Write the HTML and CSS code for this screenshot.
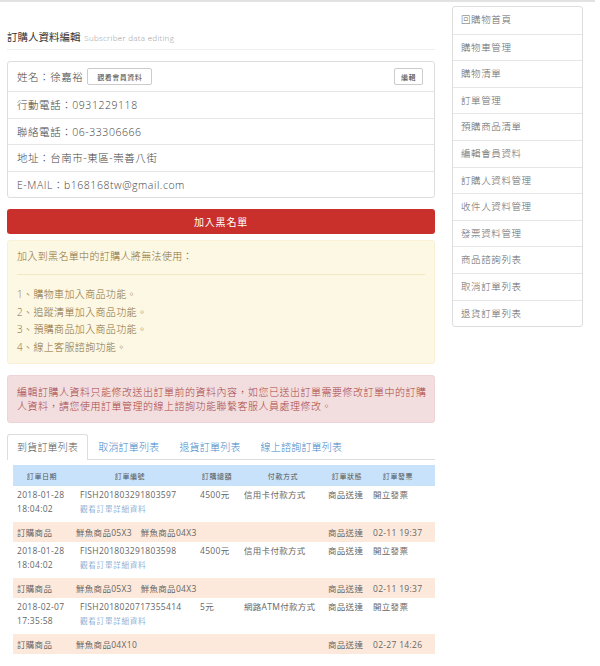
FILE: index.html
```html
<html><head>
<meta charset="utf-8">
<meta name="viewport" content="width=device-width, initial-scale=1">
<title>訂購人資料編輯</title>
<link rel="stylesheet" href="styles.css">
</head>
<body>
  <div class="topbar"></div>

  <div class="page">
    <main class="content">
      <div class="page-header">
        <h1>訂購人資料編輯 <small>Subscriber data editing</small></h1>
      </div>

      <ul class="info-list">
        <li class="info-name">
          <span>姓名：徐嘉裕</span>
          <button class="btn-sm">觀看會員資料</button>
          <button class="btn-sm btn-edit">編輯</button>
        </li>
        <li>行動電話：0931229118</li>
        <li>聯絡電話：06-33306666</li>
        <li>地址：台南市-東區-崇善八街</li>
        <li>E-MAIL：b168168tw@gmail.com</li>
      </ul>

      <button class="btn-danger">加入黑名單</button>

      <div class="alert alert-warning">
        <p>加入到黑名單中的訂購人將無法使用：</p>
        <hr>
        <ul class="rule-list">
          <li>1、購物車加入商品功能。</li>
          <li>2、追蹤清單加入商品功能。</li>
          <li>3、預購商品加入商品功能。</li>
          <li>4、線上客服諮詢功能。</li>
        </ul>
      </div>

      <div class="alert alert-danger">
        編輯訂購人資料只能修改送出訂單前的資料內容，如您已送出訂單需要修改訂單中的訂購人資料，請您使用訂單管理的線上諮詢功能聯繫客服人員處理修改。
      </div>

      <ul class="tabs">
        <li class="active">到貨訂單列表</li>
        <li>取消訂單列表</li>
        <li>退貨訂單列表</li>
        <li>線上諮詢訂單列表</li>
      </ul>

      <div class="orders">
        <div class="order-head">
          <div>訂單日期</div>
          <div>訂單編號</div>
          <div>訂購總額</div>
          <div>付款方式</div>
          <div>訂單狀態</div>
          <div>訂單發票</div>
        </div>
        <div id="order-list"></div>
      </div>
    </main>

    <aside class="sidebar">
      <ul class="side-menu">
        <li>回購物首頁</li>
        <li>購物車管理</li>
        <li>購物清單</li>
        <li>訂單管理</li>
        <li>預購商品清單</li>
        <li>編輯會員資料</li>
        <li>訂購人資料管理</li>
        <li>收件人資料管理</li>
        <li>發票資料管理</li>
        <li>商品諮詢列表</li>
        <li>取消訂單列表</li>
        <li>退貨訂單列表</li>
      </ul>
    </aside>
  </div>

  <script>
    const orders = [
      { date: "2018-01-28", time: "18:04:02", no: "FISH201803291803597", total: "4500元", pay: "信用卡付款方式", status: "商品送達", invoice: "開立發票", items: "鮮魚商品05X3　鮮魚商品04X3", arrived: "02-11 19:37" },
      { date: "2018-01-28", time: "18:04:02", no: "FISH201803291803598", total: "4500元", pay: "信用卡付款方式", status: "商品送達", invoice: "開立發票", items: "鮮魚商品05X3　鮮魚商品04X3", arrived: "02-11 19:37" },
      { date: "2018-02-07", time: "17:35:58", no: "FISH2018020717355414", total: "5元", pay: "網路ATM付款方式", status: "商品送達", invoice: "開立發票", items: "鮮魚商品04X10", arrived: "02-27 14:26" }
    ];

    function createOrderRows(order) {
      return `
        <div class="order-row">
          <div>${order.date}<br>${order.time}</div>
          <div>${order.no}<br><a class="order-link">觀看訂單詳細資料</a></div>
          <div>${order.total}</div>
          <div>${order.pay}</div>
          <div>${order.status}</div>
          <div>${order.invoice}</div>
        </div>
        <div class="order-items">
          <div>訂購商品</div>
          <div>${order.items}</div>
          <div>${order.status}</div>
          <div>${order.arrived}</div>
        </div>
      `;
    }

    document.getElementById('order-list').innerHTML = orders.map(createOrderRows).join('');
  </script>
</body>
</html>
```

FILE: styles.css
```css
* {
  box-sizing: border-box;
}
body, html {
  margin: 0;
  padding: 0;
  font-family: 'Open Sans', 'Noto Sans CJK TC', sans-serif;
  font-weight: 300;
  color: #555;
  background-color: #fff;
}
.topbar {
  width: 595px;
  height: 2px;
  background-color: #e2e2e2;
}
.page {
  display: flex;
  gap: 17px;
  padding-left: 7px;
}
.content {
  width: 428px;
}
.sidebar {
  width: 131px;
  margin-top: 4px;
}
.page-header {
  margin: 0 0 11px;
  padding: 28px 0 4px;
  border-bottom: 1px solid #eee;
}
.page-header h1 {
  margin: 0;
  font-size: 10.5px;
  line-height: 14px;
  font-weight: normal;
  color: #333;
}
.page-header small {
  font-size: 8px;
  font-weight: 300;
  color: #999;
  letter-spacing: 0.3px;
  margin-left: 1px;
}
.info-list {
  list-style-type: none;
  margin: 0;
  padding: 0;
  border: 1px solid #ddd;
  border-radius: 3px;
}
.info-list li {
  display: flex;
  align-items: center;
  height: 26.5px;
  padding: 0 11px 0 9px;
  border-top: 1px solid #e6e6e6;
  font-size: 10.5px;
  letter-spacing: 0.55px;
  color: #444;
}
.info-list li.info-name {
  height: 29px;
  border-top: 0;
}
.btn-sm {
  height: 17px;
  margin-left: 4px;
  padding: 0 9px;
  font-family: inherit;
  font-size: 7px;
  letter-spacing: 0.5px;
  color: #444;
  background-color: #fff;
  border: 1px solid #ccc;
  border-radius: 2px;
}
.btn-sm.btn-edit {
  margin-left: auto;
  padding: 0 6px;
}
.btn-danger {
  display: block;
  width: 100%;
  height: 25px;
  margin-top: 11px;
  border: 0;
  border-radius: 3px;
  background-color: #c9302c;
  color: #fff;
  font-family: inherit;
  font-size: 10px;
  letter-spacing: 0.8px;
}
.alert {
  border-radius: 3px;
  font-size: 10px;
}
.alert-warning {
  margin-top: 6px;
  padding: 8px 9px 7px 9px;
  background-color: #fcf8e3;
  border: 1px solid #faf1d4;
  color: #8a6d3b;
  letter-spacing: 0.35px;
}
.alert-warning p {
  margin: 0;
  line-height: 15px;
}
.alert-warning hr {
  margin: 10px 0 11px;
  border: 0;
  border-top: 1px solid #f4e8c4;
}
.rule-list {
  list-style-type: none;
  margin: 0;
  padding: 0;
  line-height: 17.5px;
}
.alert-danger {
  margin-top: 11px;
  padding: 9px 7px 9px 9px;
  background-color: #f2dede;
  border: 1px solid #efd3d6;
  color: #a94442;
  line-height: 14px;
  letter-spacing: 0.5px;
}
.tabs {
  display: flex;
  list-style-type: none;
  margin: 11px 0 0;
  padding: 0;
  border-bottom: 1px solid #ddd;
}
.tabs li {
  height: 26px;
  margin: 0 0 -1px 0;
  padding: 0 9px;
  line-height: 24px;
  font-size: 10px;
  letter-spacing: 0.2px;
  color: #3d85c6;
  border: 1px solid transparent;
  border-bottom: 0;
  border-radius: 3px 3px 0 0;
}
.tabs li.active {
  color: #555;
  background-color: #fff;
  border-color: #ddd;
}
.orders {
  margin: 5px 0 0 6px;
  font-size: 8.5px;
  font-weight: 400;
  letter-spacing: 0.3px;
  color: #666;
}
.order-head {
  display: grid;
  grid-template-columns: 58px 118px 56px 76px 52px 50px;
  align-items: center;
  height: 21px;
  background-color: #c9e2fb;
  font-size: 7px;
  letter-spacing: 0.6px;
  text-align: center;
  color: #555;
}
.order-row {
  display: grid;
  grid-template-columns: 63px 120px 44px 84px 45px 1fr;
  padding: 2px 0 6px;
  line-height: 14px;
}
.order-row > div,
.order-items > div {
  padding-left: 4px;
  white-space: nowrap;
}
.order-link {
  color: #4a86bd;
  font-size: 7.5px;
  font-weight: 300;
  letter-spacing: 0.8px;
}
.order-items {
  display: grid;
  grid-template-columns: 59px 252px 45px 1fr;
  align-items: center;
  height: 20px;
  background-color: #fde9db;
}
.side-menu {
  list-style-type: none;
  margin: 0;
  padding: 0;
  border: 1px solid #ddd;
  border-radius: 3px;
}
.side-menu li {
  height: 26.6px;
  padding-left: 8px;
  line-height: 25.6px;
  border-top: 1px solid #e6e6e6;
  font-size: 9.5px;
  letter-spacing: 0.6px;
  color: #666;
}
.side-menu li:first-child {
  border-top: 0;
}
```
